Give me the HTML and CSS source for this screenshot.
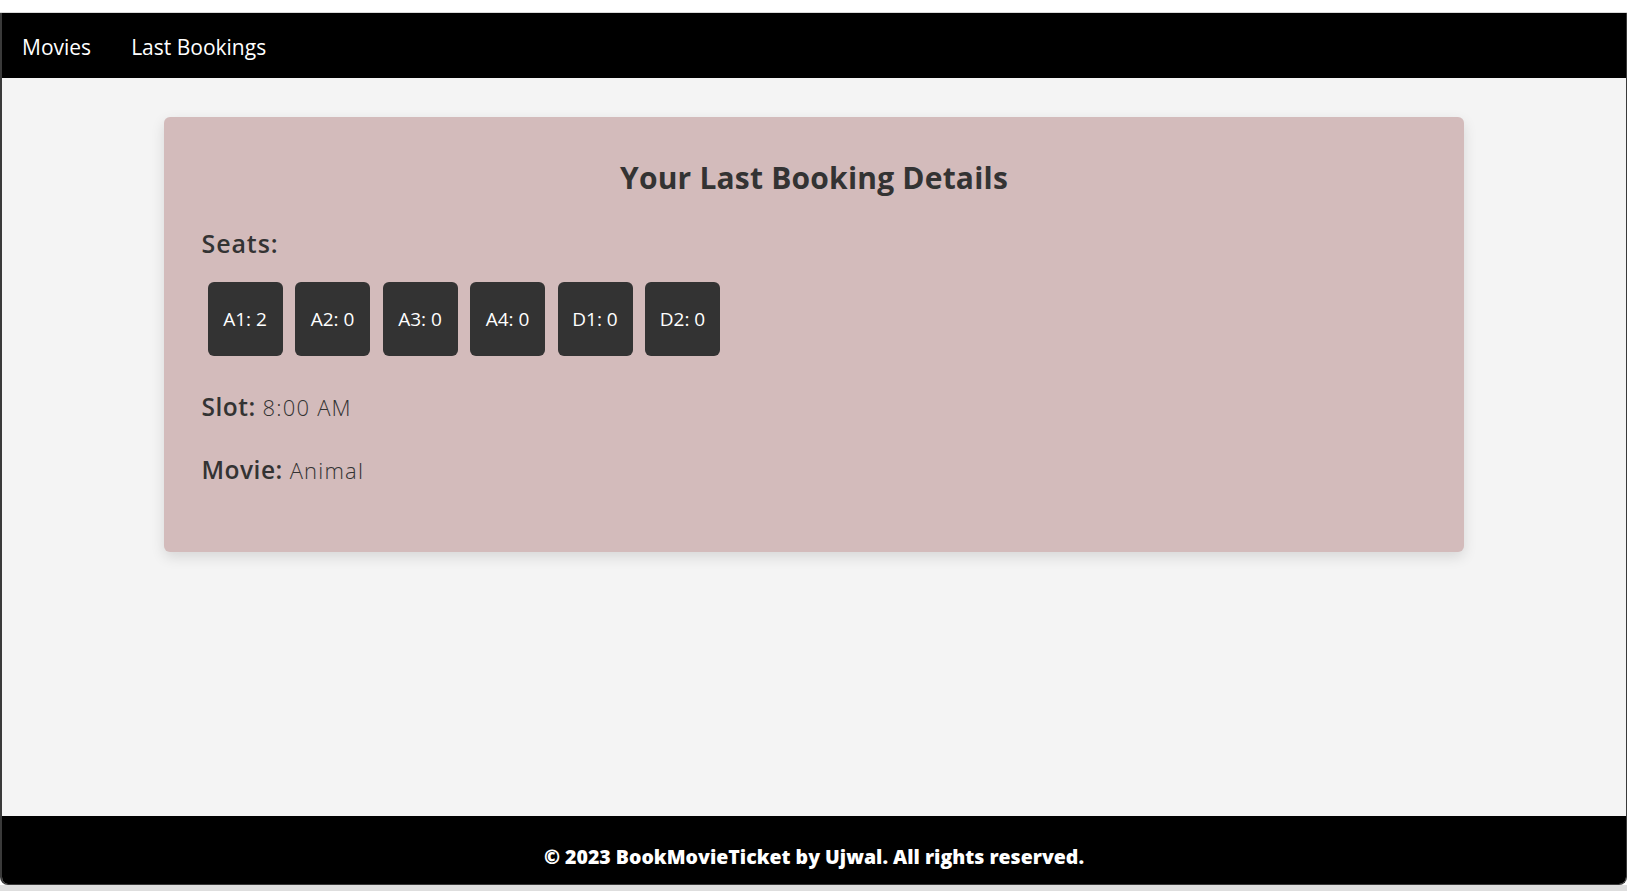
FILE: index.html
```html
<!DOCTYPE html>
<html lang="en">
<head>
<meta charset="utf-8">
<title>Last Bookings</title>
<link rel="stylesheet" href="styles.css">
</head>
<body>
<div class="desktop">
  <div class="top-strip"></div>
  <div class="window">
    <nav class="navbar">
      <a class="nav-link" href="#">Movies</a>
      <a class="nav-link" href="#">Last Bookings</a>
    </nav>
    <main class="main">
      <section class="card">
        <h2 class="card-title">Your Last Booking Details</h2>
        <h3 class="seats-label">Seats:</h3>
        <div class="seats">
          <div class="seat">A1: 2</div>
          <div class="seat">A2: 0</div>
          <div class="seat">A3: 0</div>
          <div class="seat">A4: 0</div>
          <div class="seat">D1: 0</div>
          <div class="seat">D2: 0</div>
        </div>
        <p class="detail detail-slot"><strong>Slot:</strong> 8:00 AM</p>
        <p class="detail detail-movie"><strong>Movie:</strong> Animal</p>
      </section>
    </main>
    <footer class="footer">
      <p class="footer-text">© 2023 BookMovieTicket by Ujwal. All rights reserved.</p>
    </footer>
  </div>
  <div class="bottom-strip"></div>
</div>
</body>
</html>
```

FILE: styles.css
```css
* { box-sizing: border-box; }

html, body {
  margin: 0;
  padding: 0;
}

body {
  font-family: "Open Sans", "Noto Sans", sans-serif;
  color: #333;
  background: #fff;
}

.desktop {
  height: 891px;
  display: flex;
  flex-direction: column;
  overflow: hidden;
}

.top-strip {
  height: 13px;
  background: #ffffff;
  border-bottom: 1px solid #d9d9d9;
  flex: none;
}

.window {
  flex: 1;
  display: flex;
  flex-direction: column;
  border-left: 2px solid #3a3a3a;
  border-right: 1px solid #3a3a3a;
  border-bottom: 1px solid #3a3a3a;
  border-radius: 0 0 8px 8px;
  overflow: hidden;
  background: #f4f4f4;
}

.bottom-strip {
  height: 6px;
  flex: none;
  background: #dedede;
}

.navbar {
  height: 65px;
  background: #000;
  display: flex;
  align-items: center;
  gap: 40px;
  padding: 3px 0 0 20px;
  flex: none;
}

.nav-link {
  color: #fff;
  text-decoration: none;
  font-size: 21px;
  line-height: 30px;
}

.main {
  flex: 1;
  padding-top: 39px;
  display: flex;
  justify-content: center;
  align-items: flex-start;
}

.card {
  width: 1300px;
  background: #d3bbbb;
  border-radius: 6px;
  box-shadow: 0 5px 14px rgba(0, 0, 0, 0.12);
  padding: 37.5px 37.5px 65.5px;
}

.card-title {
  margin: 0 0 25px;
  text-align: center;
  font-size: 30px;
  line-height: 45px;
  letter-spacing: 0.2px;
  font-weight: 700;
  color: #333;
}

.seats-label {
  margin: 0;
  font-size: 25px;
  line-height: 36px;
  letter-spacing: 0.9px;
  font-weight: 600;
  color: #333;
}

.seats {
  display: flex;
  gap: 12.5px;
  margin: 21.5px 0 0 6px;
}

.seat {
  width: 75px;
  height: 74px;
  background: #333;
  color: #fff;
  border-radius: 6px;
  display: flex;
  align-items: center;
  justify-content: center;
  font-size: 19px;
  font-weight: 500;
}

.detail {
  margin: 0;
  font-size: 22px;
  line-height: 33px;
  letter-spacing: 1.2px;
  font-weight: 300;
  color: #333;
}

.detail strong {
  font-size: 24.5px;
  letter-spacing: 0.5px;
  font-weight: 600;
}

.detail-slot { margin-top: 34px; }
.detail-movie { margin-top: 28.5px; }

.footer {
  flex: none;
  height: 68px;
  background: #000;
  padding-top: 26px;
}

.footer-text {
  margin: 0;
  text-align: center;
  color: #fff;
  font-size: 19.5px;
  line-height: 30px;
  font-weight: 800;
}
```
